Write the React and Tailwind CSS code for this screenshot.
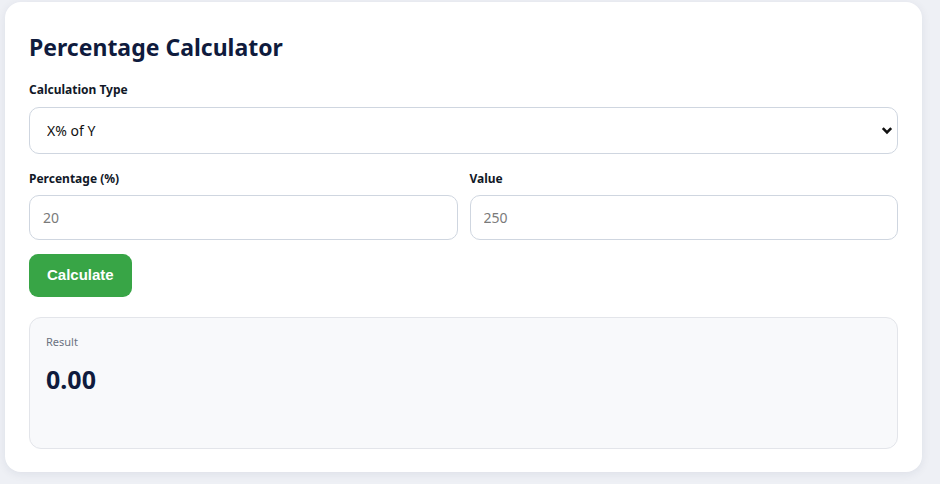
import React, { useState } from 'react';

export default function App() {
    const [type, setType] = useState('xofy');
    const [pct, setPct] = useState('');
    const [val, setVal] = useState('');
    const [result, setResult] = useState('0.00');

    const calculate = () => {
        const p = parseFloat(pct) || 0;
        const v = parseFloat(val) || 0;
        setResult(((p / 100) * v).toFixed(2));
    };

    return (
        <div className="min-h-[484px] bg-[#eef0f5] pl-[5px] pt-[2px]" style={{ fontFamily: '"Noto Sans", "Open Sans", sans-serif' }}>
            <div className="w-[917px] h-[470px] bg-white rounded-[16px] shadow-[0_2px_10px_rgba(30,40,80,0.08)] px-6 pt-[29px]">
                <h1 className="text-[23px] font-bold text-[#0f1b3d] leading-8 mb-[18px]">Percentage Calculator</h1>

                {/* Tipo de cálculo */}
                <label className="block text-[12px] font-bold text-[#111827] mb-[8px]">Calculation Type</label>
                <div className="relative">
                    <select
                        value={type}
                        onChange={e => setType(e.target.value)}
                        className="appearance-none w-full h-[47px] border border-[#cfd6e0] rounded-[10px] bg-white pl-[17px] text-[14px] text-[#111] outline-none"
                    >
                        <option value="xofy">X% of Y</option>
                        <option value="xisy">X is what % of Y</option>
                        <option value="change">% change</option>
                    </select>
                    <svg className="absolute right-[5px] top-[19px] pointer-events-none" width="12" height="9" viewBox="0 0 12 9">
                        <path d="M1.8 2.2 L6 6.4 L10.2 2.2" fill="none" stroke="#111" strokeWidth="2.6" />
                    </svg>
                </div>

                {/* Entradas */}
                <div className="grid grid-cols-2 gap-3 mt-[16px]">
                    <div>
                        <label className="block text-[12px] font-bold text-[#111827] mb-[7px]">Percentage (%)</label>
                        <input
                            value={pct}
                            onChange={e => setPct(e.target.value)}
                            placeholder="20"
                            className="w-full h-[45px] border border-[#cfd6e0] rounded-[10px] px-[13px] text-[14px] text-[#111] placeholder:text-[#7a7a7a] outline-none"
                        />
                    </div>
                    <div>
                        <label className="block text-[12px] font-bold text-[#111827] mb-[7px]">Value</label>
                        <input
                            value={val}
                            onChange={e => setVal(e.target.value)}
                            placeholder="250"
                            className="w-full h-[45px] border border-[#cfd6e0] rounded-[10px] px-[13px] text-[14px] text-[#111] placeholder:text-[#7a7a7a] outline-none"
                        />
                    </div>
                </div>

                <button
                    onClick={calculate}
                    className="mt-[14px] h-[43px] px-[18px] rounded-[9px] bg-[#38a546] text-white text-[15px] font-bold"
                    style={{ fontFamily: '"Liberation Sans", Arial, sans-serif' }}
                >
                    Calculate
                </button>

                {/* Resultado */}
                <div className="mt-[20px] h-[132px] border border-[#e3e5ea] rounded-[12px] bg-[#f8f9fb] px-4 pt-[16px]">
                    <p className="text-[11px] text-[#6b7280]">Result</p>
                    <p className="mt-[10px] text-[25px] font-bold text-[#0f1b3d]">{result}</p>
                </div>
            </div>
        </div>
    );
}
